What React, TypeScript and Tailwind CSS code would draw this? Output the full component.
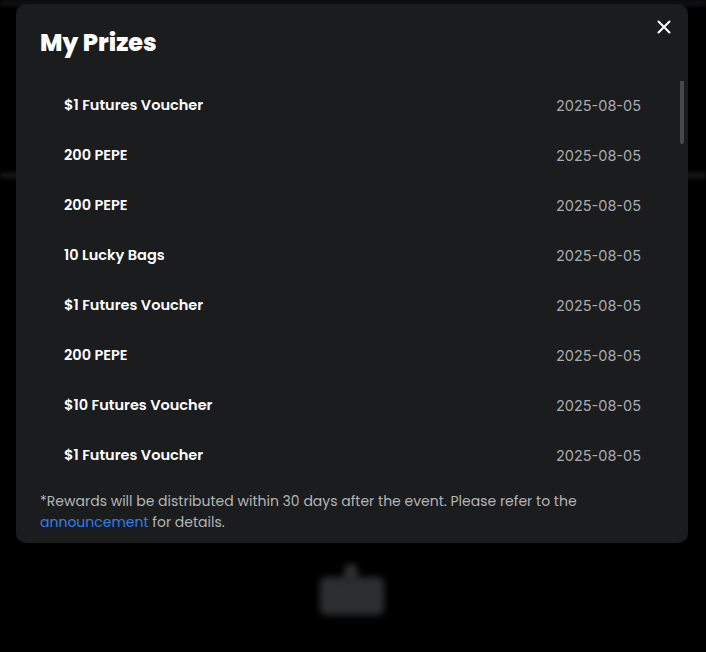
import React from 'react'

interface Prize {
  name: string
  date: string
}

const prizes: Prize[] = [
  { name: '$1 Futures Voucher', date: '2025-08-05' },
  { name: '200 PEPE', date: '2025-08-05' },
  { name: '200 PEPE', date: '2025-08-05' },
  { name: '10 Lucky Bags', date: '2025-08-05' },
  { name: '$1 Futures Voucher', date: '2025-08-05' },
  { name: '200 PEPE', date: '2025-08-05' },
  { name: '$10 Futures Voucher', date: '2025-08-05' },
  { name: '$1 Futures Voucher', date: '2025-08-05' },
  { name: '200 PEPE', date: '2025-08-05' },
  { name: '10 Lucky Bags', date: '2025-08-05' },
]

const CloseIcon = () => (
  <svg width="14" height="14" viewBox="0 0 14 14" fill="none">
    <path d="M1.5 1.5l11 11M12.5 1.5l-11 11" stroke="#fff" strokeWidth="2" strokeLinecap="round" />
  </svg>
)

// blurred page that sits behind the dialog
const Backdrop = () => (
  <div className="absolute inset-0 overflow-hidden bg-black">
    <div className="absolute left-0 right-0 top-0 h-[6px] bg-[#111214] blur-[2px]" />
    <div className="absolute left-0 top-[173px] h-[5px] w-[30px] bg-[#1a1a1c] blur-[2px]" />
    <div className="absolute right-0 top-[173px] h-[5px] w-[30px] bg-[#1a1a1c] blur-[2px]" />
    <div className="absolute left-[320px] top-[577px] h-[38px] w-[64px] rounded-[6px] bg-[#2c2d2f] blur-[3px]" />
    <div className="absolute left-[344px] top-[564px] h-[18px] w-[14px] rounded-t-[6px] bg-[#2c2d2f] blur-[3px]" />
  </div>
)

export default function App() {
  return (
    <div className="relative h-[652px] w-[706px] overflow-hidden bg-black font-['Poppins','Lato',sans-serif]">
      <Backdrop />
      <div className="relative ml-[16px] mt-[4px] w-[672px] rounded-[10px] bg-[#1b1c1e]">
        <button className="absolute right-[17px] top-[16px] flex h-[14px] w-[14px] items-center justify-center">
          <CloseIcon />
        </button>
        <h2 className="px-[24px] pt-[23px] text-[24px] font-extrabold leading-[32px] text-white">
          My Prizes
        </h2>
        <div className="relative mt-[22px] h-[400px] overflow-hidden">
          <div className="flex flex-col">
            {prizes.map((p, i) => (
              <div key={i} className="flex h-[50px] shrink-0 items-center justify-between pl-[48px] pr-[47px]">
                <span className="text-[14.5px] font-semibold text-white">{p.name}</span>
                <span className="font-['Inter',sans-serif] text-[14.5px] text-[#a9abae]">{p.date}</span>
              </div>
            ))}
          </div>
          <div className="absolute right-[4px] top-[-1px] h-[64px] w-[4px] rounded-full bg-[#46484b]" />
        </div>
        <p className="px-[24px] pb-[10px] pt-[10px] text-[14px] leading-[21px] text-[#b4b5b7]">
          *Rewards will be distributed within 30 days after the event. Please refer to the{' '}
          <a className="text-[#2f7ff0]">announcement</a> for details.
        </p>
      </div>
    </div>
  )
}
